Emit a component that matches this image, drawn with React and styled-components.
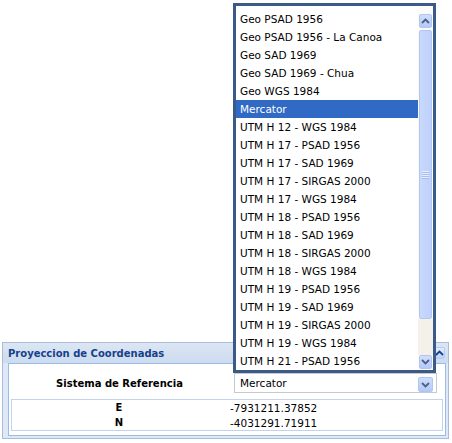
import React from "react";
import styled, { createGlobalStyle } from "styled-components";

const GlobalStyle = createGlobalStyle`
  html, body {
    margin: 0;
    padding: 0;
    background: #fff;
  }
  body {
    font-family: "DejaVu Sans", Tahoma, sans-serif;
  }
`;

const Page = styled.div`
  width: 452px;
  height: 443px;
  box-sizing: border-box;
  padding: 342px 3px 0 2px;
  overflow: hidden;
`;

const Panel = styled.div`
  border: 1px solid #a9bdd8;
  background: #dfe8f6;
  padding: 0 2px 2px 5px;
`;

const Header = styled.div`
  height: 20px;
  margin-left: -5px;
  margin-right: -2px;
  padding: 0 3px 0 5px;
  display: flex;
  align-items: center;
  justify-content: space-between;
  background: linear-gradient(#dce6f4, #cddbef);
`;

const Title = styled.span`
  color: #15428b;
  font-size: 10px;
  font-weight: bold;
`;

const Tool = styled.div`
  width: 12px;
  height: 12px;
  border-radius: 2px;
  background: linear-gradient(#e4edfd, #bcd0f6);
  border: 1px solid #b8cbee;
  box-sizing: border-box;
  display: flex;
  align-items: center;
  justify-content: center;
`;

const Body = styled.div`
  background: #fff;
  border: 1px solid #99bbe8;
  padding: 9px 2px 4px 2px;
`;

const FieldRow = styled.div`
  display: grid;
  grid-template-columns: 1fr 203px;
  align-items: center;
  padding-right: 6px;
`;

const Label = styled.div`
  text-align: center;
  font-size: 10px;
  font-weight: bold;
  color: #000;
  padding-right: 6px;
`;

const SelectWrap = styled.div`
  position: relative;
`;

const Select = styled.div`
  height: 20px;
  box-sizing: border-box;
  border: 1px solid #c4c9d2;
  background: #fff;
  display: flex;
  align-items: center;
  justify-content: space-between;
  padding: 0 3px 0 5px;
`;

const SelectText = styled.span`
  font-size: 10.5px;
  color: #000;
`;

const ArrowBtn = styled.div`
  width: 15px;
  height: 15px;
  box-sizing: border-box;
  margin-top: 3px;
  border: 1px solid #b1c5f3;
  border-radius: 2px;
  background: linear-gradient(#d0defd, #b4c9f8);
  display: flex;
  align-items: center;
  justify-content: center;
`;

const DropList = styled.div`
  position: absolute;
  left: -1px;
  bottom: 100%;
  width: 203px;
  height: 370px;
  box-sizing: border-box;
  border: 3px solid #3b5a87;
  background: #fff;
  display: flex;
  z-index: 5;
`;

const Items = styled.div`
  flex: 1;
  padding-top: 4px;
  overflow: hidden;
`;

const Item = styled.div`
  height: 18px;
  line-height: 18px;
  padding-left: 4px;
  font-size: 10.5px;
  white-space: nowrap;
  color: ${(p) => (p.$active ? "#fff" : "#000")};
  background: ${(p) => (p.$active ? "#316ac5" : "transparent")};
`;

const ScrollBar = styled.div`
  width: 15px;
  box-sizing: border-box;
  padding: 8px 1px 1px 1px;
  display: flex;
  flex-direction: column;
  background: #fbfbf8;
`;

const ScrollBtn = styled.div`
  height: 14px;
  box-sizing: border-box;
  border: 1px solid #b1c5f3;
  border-radius: 2px;
  background: linear-gradient(#d0defd, #b4c9f8);
  display: flex;
  align-items: center;
  justify-content: center;
`;

const Thumb = styled.div`
  height: 289px;
  margin-top: 2px;
  box-sizing: border-box;
  border: 1px solid #b1c5f2;
  border-radius: 2px;
  background: linear-gradient(90deg, #c9d9fd, #bed1fb);
  display: flex;
  flex-direction: column;
  align-items: center;
  justify-content: center;
  gap: 1px;
`;

const Grip = styled.div`
  width: 7px;
  height: 1px;
  background: #e9effd;
  box-shadow: 0 1px 0 #a6bcec;
`;

const Track = styled.div`
  flex: 1;
  background: #f3f1ea;
  margin: 0 -1px;
`;

const Coords = styled.div`
  margin-top: 6px;
  border: 1px solid #c3d3ee;
  padding: 0;
`;

const CoordRow = styled.div`
  display: grid;
  grid-template-columns: 214px 1fr;
  height: 15px;
  align-items: center;
`;

const Key = styled.div`
  text-align: center;
  font-size: 10px;
  font-weight: bold;
`;

const Val = styled.div`
  padding-left: 4px;
  font-size: 10.5px;
`;

const Chevron = ({ up, color = "#4d6185" }) => (
  <svg width="9" height="6" viewBox="0 0 9 6">
    <polyline
      points={up ? "1,5 4.5,1.5 8,5" : "1,1 4.5,4.5 8,1"}
      fill="none"
      stroke={color}
      strokeWidth="1.8"
    />
  </svg>
);

const items = [
  "Geo PSAD 1956",
  "Geo PSAD 1956 - La Canoa",
  "Geo SAD 1969",
  "Geo SAD 1969 - Chua",
  "Geo WGS 1984",
  "Mercator",
  "UTM H 12 - WGS 1984",
  "UTM H 17 - PSAD 1956",
  "UTM H 17 - SAD 1969",
  "UTM H 17 - SIRGAS 2000",
  "UTM H 17 - WGS 1984",
  "UTM H 18 - PSAD 1956",
  "UTM H 18 - SAD 1969",
  "UTM H 18 - SIRGAS 2000",
  "UTM H 18 - WGS 1984",
  "UTM H 19 - PSAD 1956",
  "UTM H 19 - SAD 1969",
  "UTM H 19 - SIRGAS 2000",
  "UTM H 19 - WGS 1984",
  "UTM H 21 - PSAD 1956",
];

const App = () => {
  const selected = "Mercator";
  return (
    <>
      <GlobalStyle />
      <Page>
        <Panel>
          <Header>
            <Title>Proyeccion de Coordenadas</Title>
            <Tool>
              <Chevron up color="#15428b" />
            </Tool>
          </Header>
          <Body>
            <FieldRow>
              <Label>Sistema de Referencia</Label>
              <SelectWrap>
                <DropList>
                  <Items>
                    {items.map((it) => (
                      <Item key={it} $active={it === selected}>
                        {it}
                      </Item>
                    ))}
                  </Items>
                  <ScrollBar>
                    <ScrollBtn>
                      <Chevron up />
                    </ScrollBtn>
                    <Thumb>
                      <Grip />
                      <Grip />
                      <Grip />
                      <Grip />
                    </Thumb>
                    <Track />
                    <ScrollBtn>
                      <Chevron />
                    </ScrollBtn>
                  </ScrollBar>
                </DropList>
                <Select>
                  <SelectText>{selected}</SelectText>
                  <ArrowBtn>
                    <Chevron />
                  </ArrowBtn>
                </Select>
              </SelectWrap>
            </FieldRow>
            <Coords>
              <CoordRow>
                <Key>E</Key>
                <Val>-7931211.37852</Val>
              </CoordRow>
              <CoordRow>
                <Key>N</Key>
                <Val>-4031291.71911</Val>
              </CoordRow>
            </Coords>
          </Body>
        </Panel>
      </Page>
    </>
  );
};

export default App;
